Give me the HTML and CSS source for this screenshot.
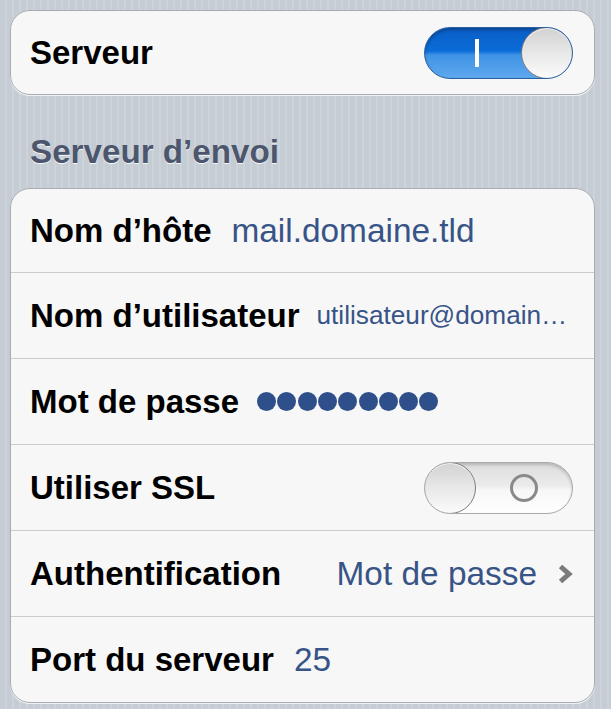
FILE: index.html
```html
<!DOCTYPE html>
<html lang="fr">
<head>
<meta charset="utf-8">
<title>Serveur</title>
<link rel="stylesheet" href="styles.css">
</head>
<body>
<main class="settings">
  <section class="group">
    <div class="cell">
      <span class="label">Serveur</span>
      <span class="switch switch-on" role="switch" aria-checked="true">
        <span class="switch-mark"><span class="mark-on"></span></span>
        <span class="knob"></span>
      </span>
    </div>
  </section>

  <h2 class="group-title">Serveur d’envoi</h2>

  <section class="group">
    <div class="cell">
      <span class="label">Nom d’hôte</span>
      <span class="value">mail.domaine.tld</span>
    </div>
    <div class="cell">
      <span class="label">Nom d’utilisateur</span>
      <span class="value value-small">utilisateur@domain…</span>
    </div>
    <div class="cell">
      <span class="label">Mot de passe</span>
      <span class="secure" aria-label="mot de passe masqué">
        <i></i><i></i><i></i><i></i><i></i><i></i><i></i><i></i><i></i>
      </span>
    </div>
    <div class="cell">
      <span class="label">Utiliser SSL</span>
      <span class="switch switch-off" role="switch" aria-checked="false">
        <span class="knob"></span>
        <span class="switch-mark"><span class="mark-off"></span></span>
      </span>
    </div>
    <div class="cell">
      <span class="label">Authentification</span>
      <span class="value value-detail">Mot de passe</span>
      <svg class="chevron" width="16" height="22" viewBox="0 0 16 22" aria-hidden="true">
        <polyline points="3.5,3.5 12,11 3.5,18.5" fill="none" stroke="#7b7b7b" stroke-width="5" stroke-linecap="butt" stroke-linejoin="miter"/>
      </svg>
    </div>
    <div class="cell">
      <span class="label">Port du serveur</span>
      <span class="value">25</span>
    </div>
  </section>
</main>
</body>
</html>
```

FILE: styles.css
```css
html, body {
  margin: 0;
  padding: 0;
}

body {
  min-height: 709px;
  background-color: #c8cfd6;
  background-image: repeating-linear-gradient(90deg,
    #c5ccd4 0px, #c5ccd4 5px,
    #cdd3da 5px, #cdd3da 7px);
  font-family: "Liberation Sans", Arial, Helvetica, sans-serif;
  -webkit-font-smoothing: antialiased;
}

.settings {
  width: 585px;
  padding: 10px 0 0 10px;
}

/* grouped table section */
.group {
  background: #f7f7f7;
  border: 1px solid #a8adb4;
  border-radius: 20px;
  box-shadow: 0 1px 0 rgba(255, 255, 255, 0.75);
  overflow: hidden;
}

.cell {
  display: flex;
  align-items: center;
  height: 85px;
  padding: 0 21px 0 19px;
  border-top: 1px solid #cbcbcb;
}

.cell:first-child {
  border-top: 0;
  height: 83px;
}

.label {
  font-weight: bold;
  font-size: 33px;
  color: #000;
  white-space: nowrap;
}

.value {
  margin-left: 20px;
  font-size: 33.4px;
  color: #385487;
  white-space: nowrap;
  overflow: hidden;
  text-overflow: ellipsis;
  min-width: 0;
}

.value-small {
  margin-left: 17px;
  font-size: 26.2px;
}

.value-detail {
  margin-left: auto;
  margin-right: 20px;
}

.chevron {
  flex: none;
  margin-right: 0;
}

.group-title {
  margin: 37px 0 16px 20px;
  font-size: 33.2px;
  line-height: 40px;
  font-weight: bold;
  color: #4c566c;
  text-shadow: 0 1px 0 rgba(255, 255, 255, 0.85);
}

/* password dots */
.secure {
  display: flex;
  gap: 1.3px;
  margin-left: 18px;
}

.secure i {
  width: 19px;
  height: 19px;
  border-radius: 50%;
  background: #2f4f8a;
}

/* on/off switch */
.switch {
  margin-left: auto;
  flex: none;
  display: flex;
  align-items: center;
  width: 149px;
  height: 52px;
  border-radius: 26px;
  box-sizing: border-box;
  overflow: hidden;
}

.switch-on {
  border: 1px solid #2a5f9e;
  background: linear-gradient(to bottom,
    #0a5dc4 0%, #0b6cd8 46%, #3f93e6 54%, #5ea8ee 100%);
  box-shadow: inset 0 2px 3px rgba(0, 0, 0, 0.25);
}

.switch-off {
  border: 1px solid #a9a9a9;
  background: linear-gradient(to bottom,
    #dcdcdc 0%, #ececec 46%, #f7f7f7 54%, #ffffff 100%);
  box-shadow: inset 0 2px 3px rgba(0, 0, 0, 0.18);
}

.switch-mark {
  flex: 1;
  display: flex;
  align-items: center;
  justify-content: center;
}

.switch-on .switch-mark {
  padding-left: 6px;
}

.mark-on {
  width: 4px;
  height: 28px;
  background: #ffffff;
}

.mark-off {
  width: 22px;
  height: 22px;
  border: 3.5px solid #8a8a8a;
  border-radius: 50%;
}

.knob {
  flex: none;
  width: 52px;
  height: 52px;
  margin: -1px;
  box-sizing: border-box;
  border-radius: 50%;
  border: 1.5px solid #7d7d7d;
  background: linear-gradient(to bottom, #d2d2d2 0%, #e8e8e8 50%, #fbfbfb 100%);
  box-shadow: inset 0 1px 0 rgba(255, 255, 255, 0.8);
}
```
